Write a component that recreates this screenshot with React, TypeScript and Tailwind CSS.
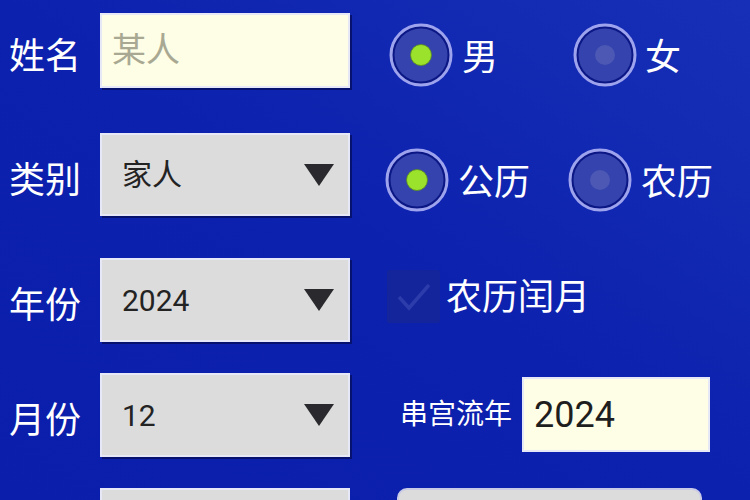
import React from "react";

const font = { fontFamily: 'Roboto, "Noto Sans CJK SC", sans-serif' };

function Radio({ checked }: { checked: boolean }) {
  return (
    <svg width="64" height="64" viewBox="0 0 64 64" className="shrink-0">
      <circle cx="32" cy="32" r="30" fill="#0b1784" stroke="#9ea3ee" strokeWidth="3" />
      <circle cx="32" cy="32" r="26.5" fill="#3443ad" />
      {checked ? (
        <circle cx="32" cy="32" r="10.5" fill="#9be22c" stroke="#5a8a20" strokeWidth="0.8" />
      ) : (
        <circle cx="32" cy="32" r="10" fill="#4c58b4" />
      )}
    </svg>
  );
}

function Select({ value }: { value: string }) {
  return (
    <div className="flex h-full w-[250px] items-center justify-between border-2 border-[#e6e8f7] bg-[#dcdcdc] pl-[20px] pr-[14px] text-[30px] text-[#232323] shadow-[2px_2px_0_#07126e]">
      <span>{value}</span>
      <svg width="30" height="22" viewBox="0 0 30 22">
        <polygon points="0,0 30,0 15,22" fill="#2a2a2e" />
      </svg>
    </div>
  );
}

function Label({ text }: { text: string }) {
  return (
    <div className="flex w-[100px] items-center pl-[9px] pt-[12px] text-[36px] leading-none text-white">
      {text}
    </div>
  );
}

function Option({ checked, text, width, gap }: { checked: boolean; text: string; width?: string; gap: string }) {
  return (
    <div className={`flex items-center ${width ?? ""} ${gap}`}>
      <Radio checked={checked} />
      <span className="pt-[5px] text-[36px] leading-none text-white">{text}</span>
    </div>
  );
}

export default function App() {
  return (
    <div
      className="flex h-[500px] w-[750px] flex-col overflow-hidden bg-linear-to-bl from-[#172fb6] via-[#0c21ae] to-[#0a1eab]"
      style={font}
    >
      {/* 姓名 + 性别 */}
      <div className="mt-[13px] flex h-[75px] shrink-0 items-start">
        <div className="flex h-full w-[350px]">
          <Label text="姓名" />
          <div className="flex h-full w-[250px] items-center border-2 border-[#e6e8f7] bg-[#fefde5] pl-[10px] text-[34px] text-[#a9a993] shadow-[2px_2px_0_#07126e]">
            某人
          </div>
        </div>
        <div className="ml-[39px] mt-[10px] flex items-center">
          <Option checked text="男" width="w-[184px]" gap="gap-[9px]" />
          <Option checked={false} text="女" gap="gap-[8px]" />
        </div>
      </div>

      {/* 类别 + 历法 */}
      <div className="mt-[45px] flex h-[83px] shrink-0 items-start">
        <div className="flex h-full w-[350px]">
          <Label text="类别" />
          <Select value="家人" />
        </div>
        <div className="ml-[35px] mt-[15px] flex items-center">
          <Option checked text="公历" width="w-[183px]" gap="gap-[9px]" />
          <Option checked={false} text="农历" gap="gap-[9px]" />
        </div>
      </div>

      {/* 年份 + 闰月 */}
      <div className="mt-[42px] flex h-[84px] shrink-0 items-start">
        <div className="flex h-full w-[350px]">
          <Label text="年份" />
          <Select value="2024" />
        </div>
        <div className="ml-[37px] mt-[12px] flex items-center gap-[6px]">
          <svg width="53" height="53" viewBox="0 0 53 53" className="shrink-0">
            <rect x="0" y="0" width="53" height="53" rx="2" fill="#14249b" />
            <path d="M12 27 L22 38 L42 15" fill="none" stroke="#2c3cab" strokeWidth="3.5" />
          </svg>
          <span className="pt-[3px] text-[36px] leading-none text-white">农历闰月</span>
        </div>
      </div>

      {/* 月份 + 串宫流年 */}
      <div className="mt-[31px] flex h-[84px] shrink-0 items-start">
        <div className="flex h-full w-[350px]">
          <Label text="月份" />
          <Select value="12" />
        </div>
        <div className="ml-[50px] mt-[4px] flex items-center gap-[10px]">
          <span className="text-[28px] leading-none text-white">串宫流年</span>
          <div className="flex h-[75px] w-[188px] items-center border-2 border-[#e6e8f7] bg-[#fefde5] pl-[10px] text-[36px] text-[#1e1e1e]">
            2024
          </div>
        </div>
      </div>

      {/* bottom row, cut off */}
      <div className="mt-[31px] flex h-[84px] shrink-0 items-start">
        <div className="flex h-full w-[350px]">
          <div className="w-[100px]" />
          <div className="h-full w-[250px] border-2 border-[#e6e8f7] bg-[#dcdcdc]" />
        </div>
        <div className="ml-[47px] h-[80px] w-[305px] rounded-[10px] border-2 border-[#c9cbe6] bg-[#dcdcdc]" />
      </div>
    </div>
  );
}
